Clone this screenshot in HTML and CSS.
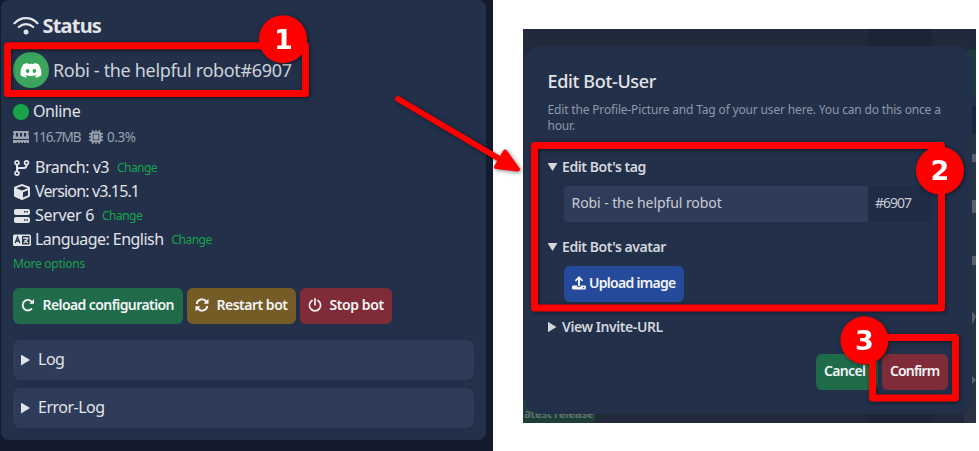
FILE: index.html
```html
<!DOCTYPE html>
<html lang="en">
<head>
<meta charset="utf-8">
<title>Bot status</title>
<link rel="stylesheet" href="styles.css">
</head>
<body>
<main class="page">
  <section class="dashboard">
    <div class="card">
      <h1 class="heading">
        <svg width="26" height="20" viewBox="0 0 26 20" fill="none" stroke="currentColor" stroke-width="2.3" stroke-linecap="round"><path d="M1.500 7.200C8 .4 18 .4 24.500 7.200M5.800 11C10 7.200 16 7.200 20.200 11"/><circle cx="13" cy="16" r="2.500" fill="currentColor" stroke="none"/></svg>
        <span>Status</span>
      </h1>
      <div class="user">
        <span class="avatar"><svg width="22" height="17" viewBox="0 0 24 18"><path fill="#fff" d="M20.300 2.100A18 18 0 0 0 15.700 .7L15 2a17 17 0 0 0-6 0L8.300 .7A18 18 0 0 0 3.700 2.100C1 6.200.2 10.200.7 14.300c1.900 1.400 3.800 2.200 5.600 2.700l1.300-2.100-1.900-.9.500-.4c3.700 1.700 7.900 1.700 11.600 0l.5.4-1.900.9 1.300 2.100c1.900-.5 3.700-1.400 5.600-2.700.6-4.700-.8-8.700-3-12.200Z"/><ellipse cx="8.300" cy="9.500" rx="2" ry="2.200" fill="#3ba55d"/><ellipse cx="15.700" cy="9.500" rx="2" ry="2.200" fill="#3ba55d"/></svg></span>
        <span class="username">Robi - the helpful robot#6907</span>
      </div>
      <div class="online"><i class="dot"></i><span>Online</span></div>
      <div class="usage">
        <svg width="16" height="12" viewBox="0 0 16 12" fill="currentColor"><path fill-rule="evenodd" d="M1 0h14q1 0 1 1v1.200a1 1 0 0 0 0 2V8H0V4.200a1 1 0 0 0 0-2V1Q0 0 1 0ZM3 2v3.500h2V2ZM7 2v3.500h2V2ZM11 2v3.500h2V2ZM0 9h16v3h-2v-1h-1v1h-2v-1h-1v1H8v-1H7v1H5v-1H4v1H0Z"/></svg>
        <span class="memory">116.7MB</span>
        <svg class="chip" width="14" height="14" viewBox="0 0 14 14" fill="currentColor"><path fill-rule="evenodd" d="M3.500 1.700h7q1.800 0 1.800 1.800v7q0 1.800-1.800 1.800h-7q-1.800 0-1.800-1.800v-7q0-1.800 1.800-1.800ZM3.700 3.700v6.600h6.600V3.700ZM4.500 4.500h5v5h-5Z"/><path d="M0 3h2v1.400H0zM0 6.300h2v1.400H0zM0 9.600h2V11H0zM12 3h2v1.400h-2zM12 6.300h2v1.400h-2zM12 9.600h2V11h-2zM3 12h1.400v2H3zM6.300 12h1.400v2H6.300zM9.600 12H11v2H9.600zM3 0h1.400v2H3zM6.300 0h1.400v2H6.300zM9.600 0H11v2H9.600z"/></svg>
        <span class="cpu">0.3%</span>
      </div>
      <ul class="facts">
        <li><svg width="18" height="16" viewBox="0 0 18 16" fill="none" stroke="currentColor" stroke-width="1.700"><circle cx="4" cy="2.800" r="1.900"/><circle cx="4" cy="13.200" r="1.900"/><circle cx="13.500" cy="2.800" r="1.900"/><path d="M4 5v6M4 9.500q0-1.500 2-1.500h5q2.500 0 2.500-3" stroke-width="2"/></svg><span class="branch">Branch: v3</span><a>Change</a></li>
        <li><svg width="18" height="16" viewBox="0 0 18 16" fill="currentColor"><path fill-rule="evenodd" d="M8.300.2q.7-.3 1.400 0l6.200 2.300q1.100.4 1.100 1.500v7.500q0 1.100-1 1.600l-6.200 2.700q-.8.400-1.600 0L2 13.100q-1-.5-1-1.600V4q0-1.100 1.100-1.500ZM9 2 3.200 4.200 9 6.500l5.800-2.300ZM10 8.200v5.300l5-2.200V6.200Z"/></svg><span class="version">Version: v3.15.1</span></li>
        <li><svg width="18" height="16" viewBox="0 0 18 16" fill="currentColor"><path fill-rule="evenodd" d="M3 1h12q2 0 2 2v2q0 2-2 2H3Q1 7 1 5V3q0-2 2-2Zm8 2v1.600h1.500V3Zm2.500 0v1.600H15V3ZM3 9h12q2 0 2 2v2q0 2-2 2H3q-2 0-2-2v-2q0-2 2-2Zm8 2.200v1.600h1.500v-1.600Zm2.500 0v1.600H15v-1.600Z"/></svg><span class="server">Server 6</span><a>Change</a></li>
        <li><svg width="18" height="16" viewBox="0 0 18 16"><rect y="2.500" width="18" height="11.500" rx="1.500" fill="currentColor"/><path fill="#22304a" d="M9 4h7.500v8.500H9z"/><path fill="none" stroke="#22304a" stroke-width="1.300" d="m2.200 11 2.300-6 2.300 6M3 9h3"/><path fill="none" stroke="currentColor" stroke-width="1.200" d="M10 6.200h5.500M12.800 5v1M14.500 6.200q-.5 3-4 5M11.500 8.300l3.500 2.900"/></svg><span class="language">Language: English</span><a>Change</a></li>
      </ul>
      <a class="more">More options</a>
      <div class="actions">
        <button class="btn green reload"><svg width="14" height="14" viewBox="0 0 14 14" fill="none" stroke="currentColor" stroke-width="1.900"><path d="M11.700 4.800A5.300 5.300 0 1 0 11 10.700"/><path d="M13 1v4.700H8.300Z" fill="currentColor" stroke="none"/></svg><span>Reload configuration</span></button>
        <button class="btn amber restart"><svg width="14" height="14" viewBox="0 0 14 14" fill="none" stroke="currentColor" stroke-width="1.900"><path d="M1.700 6A5.300 5.300 0 0 1 11.500 4M12.300 8A5.300 5.300 0 0 1 2.500 10"/><path d="M13.500.8v5H8.500ZM.5 13.200v-5h5Z" fill="currentColor" stroke="none"/></svg><span>Restart bot</span></button>
        <button class="btn red stop"><svg width="14" height="14" viewBox="0 0 14 14" fill="none" stroke="currentColor" stroke-width="1.700" stroke-linecap="round"><path d="M4 2.500a5.600 5.600 0 1 0 6 0M7 .9v5.800"/></svg><span>Stop bot</span></button>
      </div>
      <div class="log"><i class="tri right"></i><span>Log</span></div>
      <div class="log"><i class="tri right"></i><span>Error-Log</span></div>
    </div>
  </section>

  <section class="window">
    <div class="behind stripe"></div>
    <div class="behind edge"><i></i><i></i><i></i><i></i><i></i></div>
    <div class="behind release">atest release</div>
    <div class="modal">
      <h2>Edit Bot-User</h2>
      <p>Edit the Profile-Picture and Tag of your user here. You can do this once a<br>hour.</p>
      <div class="summary"><i class="tri down"></i><span>Edit Bot's tag</span></div>
      <div class="tagfield"><span class="name">Robi - the helpful robot</span><span class="number">#6907</span></div>
      <div class="summary second"><i class="tri down"></i><span>Edit Bot's avatar</span></div>
      <button class="btn blue upload"><svg width="14" height="14" viewBox="0 0 14 14" fill="currentColor"><path d="M7 0 11.200 4.300 10 5.500 8 3.600V10H6V3.600L4 5.500 2.800 4.300Z"/><path fill-rule="evenodd" d="M1.300 9.500H5q0 1.500 2 1.500t2-1.500h3.700Q14 9.500 14 10.800v1.400q0 1.300-1.300 1.300H1.300Q0 13.500 0 12.200v-1.400Q0 9.500 1.300 9.500ZM11 11v1.200h1.200V11Z"/></svg><span>Upload image</span></button>
      <div class="summary third"><i class="tri right"></i><span>View Invite-URL</span></div>
      <div class="footer"><button class="btn green cancel">Cancel</button><button class="btn red confirm">Confirm</button></div>
    </div>
  </section>
</main>

<svg class="annotations" width="979" height="451" viewBox="0 0 979 451">
  <g fill="none" stroke="#f00" stroke-width="7" stroke-linejoin="round">
    <rect x="7.500" y="45.700" width="298" height="47.800"/>
    <rect x="534.500" y="145.500" width="407" height="162.500"/>
    <rect x="872.500" y="337.500" width="83" height="60.500"/>
    <path d="M398 99 503 161" stroke-linecap="round" stroke-width="6"/>
  </g>
  <path d="M505 151.500 518 169.500 496 167Z" fill="#f00" stroke="#f00" stroke-width="4" stroke-linejoin="round"/>
  <g fill="#f00"><circle cx="283" cy="39.200" r="24"/><circle cx="940" cy="170.500" r="24"/><circle cx="864.500" cy="340.300" r="24"/></g>
  <g class="digits"><text x="283.500" y="49">1</text><text x="940" y="180">2</text><text x="864.500" y="350">3</text></g>
</svg>
</body>
</html>
```
FILE: styles.css
```css
* { box-sizing: border-box; }
body { margin: 0; background: #fff; color: #e2e4e8; font: 16px/24px "Noto Sans", sans-serif; overflow: hidden; }
h1, h2, p, ul { margin: 0; padding: 0; }
svg { flex: none; display: block; }
.page { display: flex; gap: 30px; height: 451px; white-space: nowrap; }

.dashboard { width: 493px; padding-left: 1px; background: #131b2d; }
.card { width: 485px; height: 440px; padding: 14px 12px 12px; background: #22304a; border-radius: 8px; }
.heading { display: flex; align-items: center; gap: 3.500px; height: 24px; font-size: 20px; font-weight: 700; letter-spacing: -.8px; }
.user { display: flex; align-items: center; gap: 4px; height: 36px; margin-top: 14px; font-size: 18px; letter-spacing: -.33px; color: #cfd3d9; }
.username { padding-bottom: 1px; }
.avatar { display: grid; place-items: center; width: 36px; height: 36px; border-radius: 50%; background: #3ba55d; }
.online { display: flex; align-items: center; gap: 4px; height: 24px; margin-top: 12px; letter-spacing: -.38px; }
.online span, .facts span, .log span { padding-bottom: 2px; }
.dot { width: 16px; height: 16px; border-radius: 50%; background: #18a54a; }
.usage { display: flex; align-items: center; gap: 3.500px; height: 24px; margin-top: 1px; font-size: 13.500px; color: #9ca3af; }
.memory { letter-spacing: -1.080px; }
.chip { margin-left: 5.500px; }
.cpu { letter-spacing: -.4px; }

.facts { list-style: none; margin-top: 7px; }
.facts li { display: flex; align-items: center; height: 24px; }
.facts span { margin: 0 8px 0 4px; }
.facts a, .more { font-size: 12px; letter-spacing: -.53px; color: #18a54a; }
.branch { letter-spacing: -.49px; }
.version { letter-spacing: -.87px; }
.server { letter-spacing: -.31px; }
.language { letter-spacing: -.54px; }
.more { display: block; height: 24px; letter-spacing: -.28px; }

.actions { display: flex; gap: 4px; margin: 12px 0 16px; }
.btn { display: flex; align-items: center; height: 36px; padding: 0 8px 2px; border: 0; border-radius: 6px; color: #f3f4f6; font: 600 14px/20px "Noto Sans", sans-serif; white-space: nowrap; }
.actions .btn { gap: 7.500px; }
.green { background: #1f6b4a; }
.amber { background: #755c27; }
.red { background: #802b38; }
.blue { background: #264a9b; }
.reload { width: 170px; letter-spacing: -.58px; }
.restart { width: 109px; letter-spacing: -.5px; }
.stop { width: 92px; letter-spacing: -.42px; }
.log { display: flex; align-items: center; gap: 8px; height: 40px; padding-left: 8px; border-radius: 8px; background: #2f3c59; letter-spacing: -.5px; }
.log + .log { margin-top: 8px; }

.tri { flex: none; background: currentColor; }
.right { width: 9px; height: 11px; clip-path: polygon(0 0, 100% 50%, 0 100%); }
.down { width: 10px; height: 8px; clip-path: polygon(0 0, 100% 0, 50% 100%); }

.window { position: relative; width: 453px; height: 394px; margin-top: 29px; padding: 17px 4px 9px 1px; background: #202a3b; overflow: hidden; }
.modal { position: relative; height: 368px; padding: 23px 24px 24px 23.500px; background: #22304a; border-radius: 16px; }
.modal h2 { height: 24px; font-size: 18px; font-weight: 500; line-height: 24px; letter-spacing: -.35px; }
.modal p { height: 32px; margin-top: 9px; color: #8f98a8; font-size: 12px; line-height: 16px; letter-spacing: -.165px; }
.summary { display: flex; align-items: center; gap: 4.500px; height: 20px; margin-top: 23px; color: #d3d6dc; font-size: 14px; font-weight: 600; letter-spacing: -.43px; }
.summary .right { margin-right: 1px; }
.tagfield { display: flex; width: 368px; height: 36px; margin: 9px 0 0 16.500px; border-radius: 4px; background: #202b46; overflow: hidden; color: #c9cdd5; font-size: 14px; line-height: 34px; }
.name { width: 304px; padding-left: 7.500px; background: #2f3c59; letter-spacing: -.08px; }
.number { padding-left: 7px; letter-spacing: -1px; }
.second { margin-top: 15px; }
.upload { gap: 3px; width: 120px; margin: 9px 0 0 16.500px; letter-spacing: -.7px; }
.third { margin-top: 15px; }
.footer { display: flex; justify-content: flex-end; gap: 4px; margin-top: 17px; }
.cancel { width: 62px; letter-spacing: -.66px; }
.confirm { width: 66px; letter-spacing: -.85px; }

.behind { position: absolute; }
.stripe { left: 345px; top: 0; width: 64px; height: 394px; background: #1c2535; }
.edge { right: 0; top: 21px; width: 12px; height: 373px; background: linear-gradient(#1f3a3d 0 44px, #252e42 44px 56px, #1c263b 56px 84px, #2a3341 84px 373px); }
.edge i { display: block; width: 4px; height: 8px; margin: 18px 0 0 8px; background: #59616d; }
.edge i:first-child { margin-top: 104px; }
.edge i:nth-child(2) { margin-top: 38px; height: 13px; }
.edge i:nth-child(3) { margin-top: 43px; height: 9px; }
.edge i:nth-child(4) { margin-top: 46px; height: 14px; clip-path: polygon(0 0, 100% 40%, 0 100%); }
.edge i:nth-child(5) { margin-top: 51px; height: 8px; clip-path: polygon(0 0, 100% 50%, 0 100%); }
.release { left: 0; bottom: 0; width: 73px; height: 22px; padding-left: 1px; border-radius: 0 0 5px 0; background: #1e3d39; color: #637470; font-size: 12px; font-weight: 600; line-height: 25px; letter-spacing: -.45px; }

.annotations { position: absolute; left: 0; top: 0; filter: drop-shadow(1px 1px 2px rgba(0, 0, 0, .5)); }
.digits { fill: #fff; font: 700 27px "DejaVu Sans", sans-serif; text-anchor: middle; }
```
